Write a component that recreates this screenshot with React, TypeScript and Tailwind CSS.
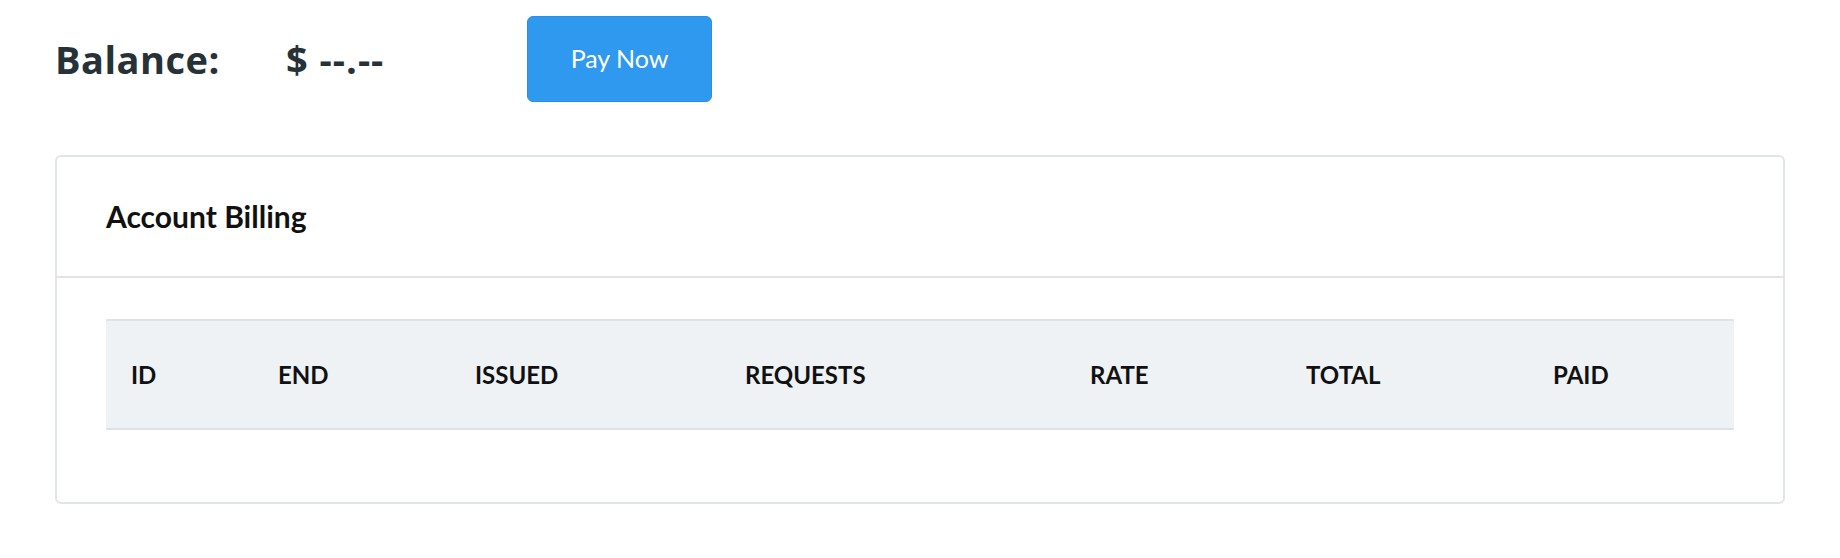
const columns = [
  { label: 'ID', width: 'w-[147px]' },
  { label: 'END', width: 'w-[197px]' },
  { label: 'ISSUED', width: 'w-[270px]' },
  { label: 'REQUESTS', width: 'w-[345px]' },
  { label: 'RATE', width: 'w-[216px]' },
  { label: 'TOTAL', width: 'w-[247px]' },
  { label: 'PAID', width: '' },
];

function BalanceBar() {
  return (
    <div className="flex items-center pt-[16px] font-['Open_Sans',sans-serif]">
      <div className="w-[231px] text-[38px] font-bold tracking-[0.5px] text-[#263238] leading-none">Balance:</div>
      <div className="w-[241px] text-[38px] font-bold tracking-[1px] text-[#263238] leading-none">$ --.--</div>
      <button className="h-[86px] w-[185px] rounded-[6px] border border-[#2a8fe3] bg-[#2f99f0] font-['Lato',sans-serif] text-[25px] text-white">
        Pay Now
      </button>
    </div>
  );
}

function BillingCard() {
  return (
    <div className="mt-[53px] rounded-[6px] border-2 border-[#e1e5e8] bg-white">
      <div className="flex h-[121px] items-center border-b-2 border-[#e1e5e8] px-[49px]">
        <h2 className="text-[30px] font-bold text-[#111]">Account Billing</h2>
      </div>
      <div className="px-[49px] pt-[41px] pb-[72px]">
        <table className="w-full table-fixed border-collapse">
          <thead>
            <tr className="h-[109px] border-y-2 border-[#dfe3e6] bg-[#eef2f5]">
              {columns.map((c) => (
                <th key={c.label} className={`${c.width} px-[25px] text-left text-[24px] font-bold text-[#111]`}>
                  {c.label}
                </th>
              ))}
            </tr>
          </thead>
          <tbody></tbody>
        </table>
      </div>
    </div>
  );
}

export default function App() {
  return (
    <div className="min-h-[558px] bg-white px-[55px] font-['Lato',sans-serif]">
      <BalanceBar />
      <BillingCard />
    </div>
  );
}
